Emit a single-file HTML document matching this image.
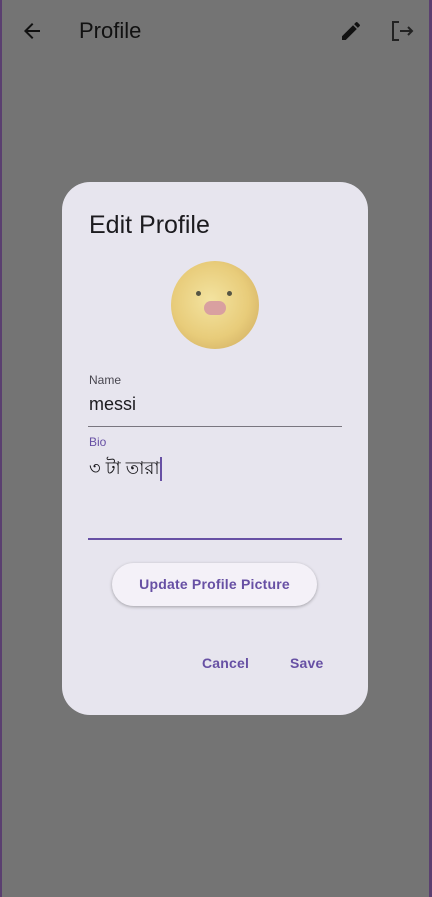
<!DOCTYPE html>
<html><head><meta charset="utf-8"><style>
body{margin:0;width:432px;height:897px;background:#747474;position:relative;overflow:hidden;font-family:"Liberation Sans",sans-serif}
.edge{position:absolute;top:0;width:2px;height:897px;background:#5a3f70}
.t{position:absolute}
.dlg{position:absolute;left:62px;top:182px;width:306px;height:533px;background:#e7e5ee;border-radius:28px}
.b{font-size:14px;font-weight:bold;color:#6750a4;letter-spacing:0.2px}
</style></head><body>
<div class="edge" style="left:0"></div><div class="edge" style="left:429px;width:3px"></div>
<svg class="t" style="left:20px;top:19px" width="24" height="24" viewBox="0 0 24 24"><path d="M20 11H7.8l5.6-5.6L12 4l-8 8 8 8 1.4-1.4L7.8 13H20z" fill="#111"/></svg>
<div class="t" style="left:79px;top:18px;font-size:22px;color:#111">Profile</div>
<svg class="t" style="left:339px;top:19px" width="24" height="24" viewBox="0 0 24 24"><path d="M3 17.25V21h3.75L17.8 9.94l-3.75-3.75zM20.7 7.04a1 1 0 0 0 0-1.41l-2.34-2.34a1 1 0 0 0-1.41 0l-1.83 1.83 3.75 3.75z" fill="#111"/></svg>
<svg class="t" style="left:390px;top:19px" width="26" height="24" viewBox="0 0 26 24"><path d="M9 3H3v18h6M10 12h12M18 8l4 4-4 4" fill="none" stroke="#222" stroke-width="2"/></svg>
<div class="dlg">
<div class="t" style="left:27px;top:29px;font-size:25px;color:#1c1b1f">Edit Profile</div>
<div class="t" style="left:109px;top:79px;width:88px;height:88px;border-radius:50%;background:radial-gradient(circle at 45% 45%,#f3e3a0 0,#e8cc7a 55%,#c9a45a 100%)">
<div class="t" style="left:33px;top:40px;width:22px;height:14px;border-radius:8px;background:#d9a0a0"></div>
<div class="t" style="left:25px;top:30px;width:5px;height:5px;border-radius:50%;background:#554"></div>
<div class="t" style="left:56px;top:30px;width:5px;height:5px;border-radius:50%;background:#554"></div></div>
<div class="t" style="left:27px;top:191px;font-size:12px;color:#48464f">Name</div>
<div class="t" style="left:27px;top:212px;font-size:18px;color:#1c1b1f">messi</div>
<div class="t" style="left:26px;top:244px;width:254px;height:1px;background:#79767f"></div>
<div class="t" style="left:27px;top:253px;font-size:12px;color:#6750a4">Bio</div>
<div class="t" style="left:27px;top:272px;font-size:18px;color:#1c1b1f;font-family:'Liberation Sans','Noto Sans CJK SC',sans-serif">৩ টা তারা<span style="display:inline-block;width:2px;height:24px;background:#6750a4;vertical-align:middle"></span></div>
<div class="t" style="left:26px;top:356px;width:254px;height:2px;background:#6750a4"></div>
<div class="t b" style="left:50px;top:381px;width:205px;height:43px;border-radius:22px;background:#f4f1f8;box-shadow:0 1px 3px rgba(0,0,0,.3);text-align:center;line-height:43px">Update Profile Picture</div>
<div class="t b" style="left:140px;top:473px">Cancel</div>
<div class="t b" style="left:228px;top:473px">Save</div>
</div>
</body></html>
